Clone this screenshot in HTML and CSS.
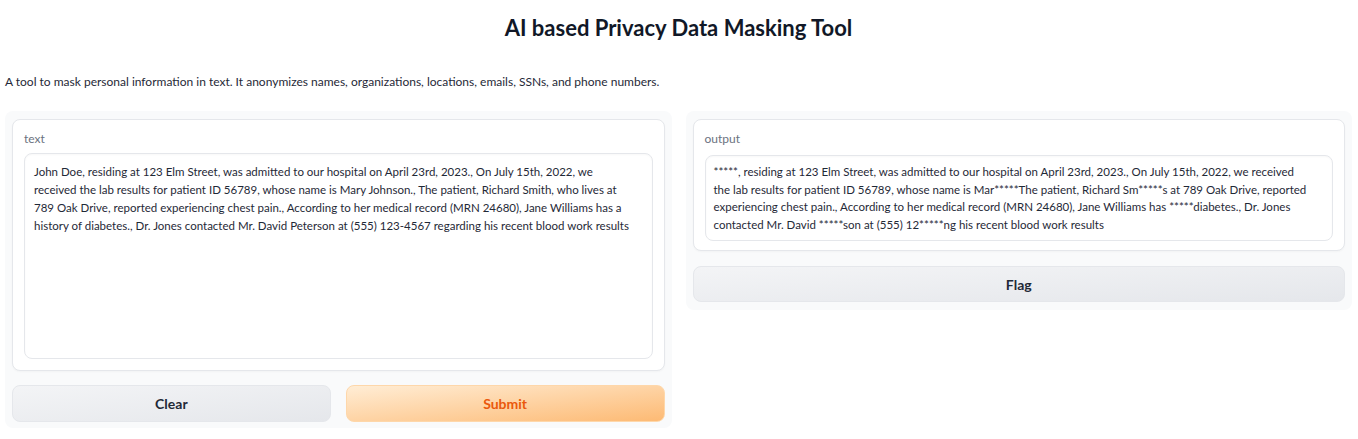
FILE: index.html
```html
<!DOCTYPE html>
<html lang="en">
<head>
    <meta charset="UTF-8">
    <title>AI based Privacy Data Masking Tool</title>
    <link rel="stylesheet" href="styles.css">
</head>
<body>
    <div class="app">
        <h1 class="title">AI based Privacy Data Masking Tool</h1>
        <p class="description">A tool to mask personal information in text. It anonymizes names, organizations, locations, emails, SSNs, and phone numbers.</p>

        <div class="row">
            <!-- 入力 -->
            <div class="panel panel-input">
                <div class="block">
                    <label for="input-text" class="block-label">text</label>
                    <textarea id="input-text" class="textbox">John Doe, residing at 123 Elm Street, was admitted to our hospital on April 23rd, 2023., On July 15th, 2022, we
received the lab results for patient ID 56789, whose name is Mary Johnson., The patient, Richard Smith, who lives at
789 Oak Drive, reported experiencing chest pain., According to her medical record (MRN 24680), Jane Williams has a
history of diabetes., Dr. Jones contacted Mr. David Peterson at (555) 123-4567 regarding his recent blood work results</textarea>
                </div>
                <div class="button-row">
                    <button class="btn btn-secondary" onclick="clearText()">Clear</button>
                    <button class="btn btn-primary">Submit</button>
                </div>
            </div>

            <!-- 出力 -->
            <div class="panel panel-output">
                <div class="block">
                    <span class="block-label">output</span>
                    <div class="output-box">*****, residing at 123 Elm Street, was admitted to our hospital on April 23rd, 2023., On July 15th, 2022, we received<br>the lab results for patient ID 56789, whose name is Mar*****The patient, Richard Sm*****s at 789 Oak Drive, reported<br>experiencing chest pain., According to her medical record (MRN 24680), Jane Williams has *****diabetes., Dr. Jones<br>contacted Mr. David *****son at (555) 12*****ng his recent blood work results</div>
                </div>
                <button class="btn btn-secondary btn-flag">Flag</button>
            </div>
        </div>
    </div>

    <script>
        function clearText() {
            document.getElementById("input-text").value = "";
        }
    </script>
</body>
</html>
```

FILE: styles.css
```css
body {
    font-family: 'Lato', 'Noto Sans', sans-serif;
    background: #ffffff;
    color: #1f2937;
    margin: 0;
}

.app {
    padding: 0 6px 0 5px;
}

.title {
    font-size: 22px;
    line-height: 28px;
    font-weight: bold;
    text-align: center;
    color: #111827;
    margin: 14px 0 0;
}

.description {
    font-size: 12px;
    line-height: 18px;
    color: #1f2937;
    margin: 31px 0 20px;
}

.row {
    display: flex;
    gap: 14px;
    align-items: flex-start;
}

.panel {
    flex: 1;
    background: #f9fafb;
    border-radius: 8px;
    padding: 8px 7px 6px;
    display: flex;
    flex-direction: column;
    gap: 14px;
}

.panel-output {
    padding-bottom: 8px;
    gap: 15px;
}

.block {
    background: white;
    border: 1px solid #e5e7eb;
    border-radius: 8px;
    padding: 11px;
    box-shadow: 0 1px 2px rgba(0, 0, 0, 0.03);
}

.block-label {
    display: block;
    font-size: 12px;
    line-height: 16px;
    color: #6b7280;
    margin-bottom: 6px;
}

.textbox, .output-box {
    display: block;
    width: 100%;
    box-sizing: border-box;
    font-family: 'Lato', 'Noto Sans', sans-serif;
    font-size: 11.5px;
    color: #1f2937;
    background: white;
    border: 1px solid #e5e7eb;
    border-radius: 8px;
    box-shadow: inset 0 1px 2px rgba(0, 0, 0, 0.03);
}

.textbox {
    height: 206px;
    line-height: 18px;
    padding: 9px 2px 9px 9px;
    resize: none;
    outline: none;
}

.output-box {
    margin-top: 8px;
    line-height: 17.5px;
    padding: 7px 2px 7px 8px;
}

.panel-output .block {
    padding-bottom: 9px;
}

.button-row {
    display: flex;
    gap: 15px;
}

.btn {
    flex: 1;
    height: 37px;
    font-family: 'Lato', 'Noto Sans', sans-serif;
    font-size: 14px;
    font-weight: bold;
    border-radius: 8px;
    cursor: pointer;
}

.btn-secondary {
    background: linear-gradient(to bottom right, #f3f4f6, #e5e7eb);
    border: 1px solid #e5e7eb;
    color: #1f2937;
}

.btn-primary {
    background: linear-gradient(to bottom right, #ffedd5, #fdba74);
    border: 1px solid #fed7aa;
    color: #ea580c;
}

.btn-flag {
    flex: none;
    height: 36px;
}
```
